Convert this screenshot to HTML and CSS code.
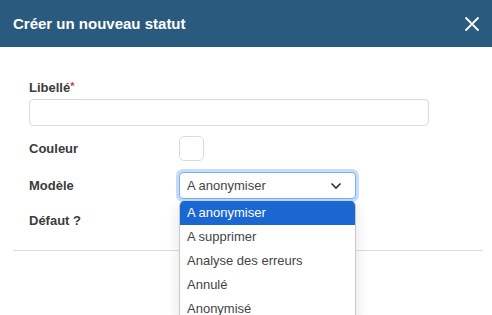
FILE: index.html
```html
<!DOCTYPE html>
<html lang="fr">
<head>
<meta charset="utf-8">
<title>Créer un nouveau statut</title>
<link rel="stylesheet" href="styles.css">
</head>
<body>
<div class="modal">
  <div class="modal-header">
    <h1 class="modal-title">Créer un nouveau statut</h1>
    <button class="close-btn" aria-label="Fermer">
      <svg width="16" height="16" viewBox="0 0 16 16"><path d="M1.5 1.5 L14.5 14.5 M14.5 1.5 L1.5 14.5" stroke="#fff" stroke-width="1.8" fill="none"/></svg>
    </button>
  </div>
  <div class="modal-body">
    <form class="form">
      <div class="field-stack">
        <label class="label">Libellé<span class="req">*</span></label>
        <input class="text-input" type="text">
      </div>
      <div class="row row-color">
        <label class="label">Couleur</label>
        <div class="color-box"></div>
      </div>
      <div class="row row-model">
        <label class="label">Modèle</label>
        <div class="select-wrap">
          <div class="select">
            <span class="select-value">A anonymiser</span>
            <svg class="chevron" width="12" height="8" viewBox="0 0 12 8"><path d="M1.5 1.5 L6 6 L10.5 1.5" stroke="#333" stroke-width="1.6" fill="none"/></svg>
          </div>
          <ul class="dropdown">
            <li class="option active">A anonymiser</li>
            <li class="option">A supprimer</li>
            <li class="option">Analyse des erreurs</li>
            <li class="option">Annulé</li>
            <li class="option">Anonymisé</li>
          </ul>
        </div>
      </div>
      <div class="row row-default">
        <label class="label">Défaut ?</label>
      </div>
    </form>
    <div class="modal-footer"></div>
  </div>
</div>
</body>
</html>
```

FILE: styles.css
```css
* { box-sizing: border-box; }
html, body {
  margin: 0;
  padding: 0;
  background: #fff;
  overflow: hidden;
  height: 315px;
}
body {
  font-family: "Liberation Sans", Arial, sans-serif;
  color: #3b3b3b;
}
.modal { width: 492px; }
.modal-header {
  height: 47px;
  background: #2a5b7e;
  display: flex;
  align-items: center;
  justify-content: space-between;
  padding: 0 12px 0 13px;
}
.modal-title {
  margin: 0;
  color: #fff;
  font-size: 15px;
  font-weight: bold;
  line-height: 18px;
}
.close-btn {
  background: none;
  border: 0;
  padding: 0;
  width: 16px;
  height: 16px;
  display: flex;
  cursor: pointer;
}
.modal-body {
  padding: 0 9px 0 13px;
}
.form {
  padding: 30px 0 0 16px;
}
.label {
  font-size: 13px;
  font-weight: bold;
  color: #3b3b3b;
  line-height: 18px;
}
.req { color: #e53935; font-size: 11px; vertical-align: 2px; }
.field-stack {
  display: flex;
  flex-direction: column;
  gap: 2px;
}
.text-input {
  width: 400px;
  height: 27px;
  border: 1px solid #dcdcdc;
  border-radius: 4px;
  margin: 0;
  padding: 0 8px;
  font: inherit;
}
.row {
  display: grid;
  grid-template-columns: 150px auto;
  align-items: center;
}
.row-color { margin-top: 10px; }
.row-model { margin-top: 11px; }
.row-default { margin-top: 12px; height: 20px; }
.color-box {
  width: 25px;
  height: 25px;
  border: 1px solid #dcdcdc;
  border-radius: 5px;
}
.select-wrap {
  position: relative;
  width: 177px;
}
.select {
  height: 27px;
  border: 1px solid #7eaef5;
  border-radius: 4px;
  box-shadow: 0 0 0 3px #c5dcfd;
  display: flex;
  align-items: center;
  justify-content: space-between;
  padding: 0 13px 0 7px;
  font-size: 13px;
  color: #444;
  background: #fff;
}
.chevron { display: block; }
.dropdown {
  position: absolute;
  left: 0;
  top: 29px;
  width: 177px;
  margin: 0;
  padding: 0;
  list-style: none;
  background: #fff;
  border: 1px solid #c9c9c9;
  border-top: 0;
  border-radius: 5px 5px 0 0;
  box-shadow: 0 4px 14px rgba(0,0,0,0.12);
  overflow: hidden;
  z-index: 2;
}
.option {
  height: 24px;
  line-height: 24px;
  padding: 0 7px;
  font-size: 13px;
  color: #444;
}
.option.active {
  background: #1a67d2;
  color: #fff;
}
.modal-footer {
  margin-top: 19px;
  border-top: 1px solid #dcdcdc;
  width: 470px;
}
```
